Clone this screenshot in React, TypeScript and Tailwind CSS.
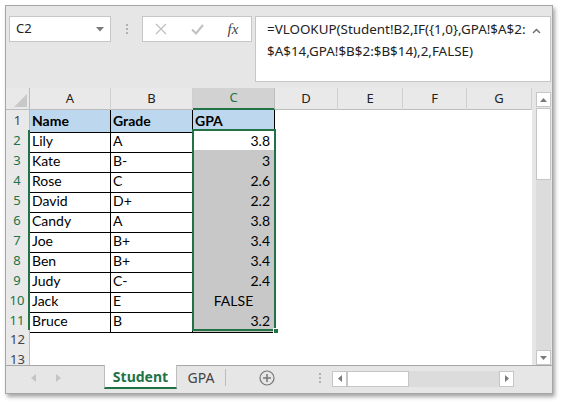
import React from "react";

const COLS = "grid-cols-[24px_81px_82px_82px_63px_65px_64px_65px]";

const data: [string, string, string][] = [
  ["Lily", "A", "3.8"],
  ["Kate", "B-", "3"],
  ["Rose", "C", "2.6"],
  ["David", "D+", "2.2"],
  ["Candy", "A", "3.8"],
  ["Joe", "B+", "3.4"],
  ["Ben", "B+", "3.4"],
  ["Judy", "C-", "2.4"],
  ["Jack", "E", "FALSE"],
  ["Bruce", "B", "3.2"],
];

const ui = { fontFamily: '"Noto Sans", "Open Sans", sans-serif' };
const cellFont = { fontFamily: 'Lato, "Noto Sans", sans-serif' };

function RowHead({ n, sel }: { n: number; sel?: boolean }) {
  return (
    <div
      className={`flex items-center justify-center text-[13px] border-b border-[#d9d9d9] ${
        sel ? "text-[#217346] border-r-2 border-r-[#217346]" : "text-[#444] border-r border-r-[#bdbdbd]"
      } bg-[#e9e9e9]`}
      style={ui}
    >
      {n}
    </div>
  );
}

export default function App() {
  return (
    <div className="w-[565px] h-[402px] bg-white overflow-hidden">
      <div className="ml-[5px] mt-[5px] w-[548px] h-[389px] border border-[#a6a6a6] bg-[#e6e6e6] shadow-[2px_3px_4px_rgba(0,0,0,0.35)] flex flex-col">
        {/* Formula bar area */}
        <div className="h-[82px] flex items-start pt-[10px] pl-[3px]" style={ui}>
          <div className="w-[102px] h-[26px] bg-white border border-[#c6c6c6] flex items-center justify-between pl-[6px] pr-[6px]">
            <span className="text-[13px] text-[#222]">C2</span>
            <svg width="8" height="5" viewBox="0 0 8 5">
              <path d="M0 0 L8 0 L4 4.5 Z" fill="#7a7a7a" />
            </svg>
          </div>
          <div className="w-[31px] h-[26px] flex flex-col items-center justify-center gap-[2px]">
            <span className="w-[2px] h-[2px] bg-[#b0b0b0]" />
            <span className="w-[2px] h-[2px] bg-[#b0b0b0]" />
            <span className="w-[2px] h-[2px] bg-[#b0b0b0]" />
          </div>
          <div className="w-[110px] h-[26px] bg-white border border-[#c6c6c6] flex items-center">
            <div className="w-[36px] flex justify-center">
              <svg width="12" height="12" viewBox="0 0 12 12">
                <path d="M1 1 L11 11 M11 1 L1 11" stroke="#c0c0c0" strokeWidth="1.3" />
              </svg>
            </div>
            <div className="w-[36px] flex justify-center">
              <svg width="13" height="11" viewBox="0 0 13 11">
                <path d="M1 5.5 L5 9.5 L12 1" stroke="#c0c0c0" strokeWidth="2" fill="none" />
              </svg>
            </div>
            <div className="w-[36px] flex justify-center">
              <span className="text-[15px] italic text-[#444] leading-none" style={{ fontFamily: '"Liberation Serif", serif' }}>
                fx
              </span>
            </div>
          </div>
          <div className="ml-[3px] w-[296px] h-[66px] bg-white border border-[#c6c6c6] flex">
            <div className="flex-1 pl-[11px] pt-[1px] text-[13.4px] leading-[22px] text-[#222]">
              <div>=VLOOKUP(Student!B2,IF({'{'}1,0{'}'},GPA!$A$2:</div>
              <div>$A$14,GPA!$B$2:$B$14),2,FALSE)</div>
            </div>
            <div className="w-[18px] pt-[11px]">
              <svg width="9" height="6" viewBox="0 0 9 6">
                <path d="M1 5 L4.5 1.5 L8 5" stroke="#707070" strokeWidth="1.5" fill="none" />
              </svg>
            </div>
          </div>
        </div>

        {/* Sheet */}
        <div className="flex h-[277px]">
          <div className="w-[526px] bg-white relative overflow-hidden">
            {/* column headers */}
            <div className={`grid ${COLS} h-[22px] bg-[#e9e9e9] border-b border-[#bdbdbd]`} style={ui}>
              <div className="flex items-end justify-end pr-[2px] pb-[3px] border-r border-[#bdbdbd]">
                <svg width="13" height="13" viewBox="0 0 13 13">
                  <path d="M13 0 L13 13 L0 13 Z" fill="#c8c8c8" />
                </svg>
              </div>
              {["A", "B", "C", "D", "E", "F", "G"].map((c) => (
                <div
                  key={c}
                  className={`flex items-center justify-center text-[13px] ${
                    c === "C"
                      ? "bg-[#d2d2d2] text-[#217346] border-b-2 border-b-[#217346] border-r border-r-[#bdbdbd]"
                      : "text-[#222] border-r border-r-[#d0d0d0]"
                  }`}
                >
                  {c}
                </div>
              ))}
            </div>
            {/* row 1 */}
            <div className={`grid ${COLS} h-[20px]`} style={cellFont}>
              <RowHead n={1} />
              <div className="bg-[#bdd7ee] border-b border-r border-black font-bold text-[14px] pl-[2px] flex items-end pb-[1px] text-black">Name</div>
              <div className="bg-[#bdd7ee] border-b border-r border-black font-bold text-[14px] pl-[2px] flex items-end pb-[1px] text-black">Grade</div>
              <div className="bg-[#bdd7ee] border-b border-r border-black font-bold text-[14px] pl-[2px] flex items-end pb-[1px] text-black">GPA</div>
              <div />
              <div />
              <div />
              <div />
            </div>
            {data.map((r, i) => (
              <div key={i} className={`grid ${COLS} h-[20px]`} style={cellFont}>
                <RowHead n={i + 2} sel />
                <div className="border-b border-r border-black text-[14px] pl-[2px] flex items-end pb-[1px] text-black">{r[0]}</div>
                <div className="border-b border-r border-black text-[14px] pl-[2px] flex items-end pb-[1px] text-black">{r[1]}</div>
                <div
                  className={`border-b border-r border-black text-[14px] flex items-end pb-[1px] text-black ${
                    r[2] === "FALSE" ? "justify-center" : "justify-end pr-[4px]"
                  } ${i === 0 ? "bg-white" : "bg-[#c8c8c8]"}`}
                >
                  {r[2]}
                </div>
                <div />
                <div />
                <div />
                <div />
              </div>
            ))}
            <div className={`grid ${COLS} h-[20px]`}>
              <RowHead n={12} />
            </div>
            <div className={`grid ${COLS} h-[20px]`}>
              <RowHead n={13} />
            </div>
            {/* selection box over C2:C11 */}
            <div className="absolute left-[186px] top-[41px] w-[84px] h-[202px] border-2 border-[#217346]" />
            <div className="absolute left-[267px] top-[240px] w-[6px] h-[6px] bg-[#217346] border border-white" />
          </div>
          {/* vertical scrollbar */}
          <div className="w-[20px] flex flex-col pl-[4px] pt-[4px] pb-[0px]">
            <div className="w-[15px] h-[15px] bg-white border border-[#c6c6c6] flex items-center justify-center">
              <svg width="7" height="4" viewBox="0 0 7 4">
                <path d="M0 4 L3.5 0 L7 4 Z" fill="#7a7a7a" />
              </svg>
            </div>
            <div className="w-[15px] h-[72px] bg-white border border-[#c6c6c6] mt-[1px]" />
            <div className="flex-1 bg-[#dcdcdc] w-[15px]" />
            <div className="w-[15px] h-[15px] bg-white border border-[#c6c6c6] flex items-center justify-center">
              <svg width="7" height="4" viewBox="0 0 7 4">
                <path d="M0 0 L3.5 4 L7 0 Z" fill="#7a7a7a" />
              </svg>
            </div>
          </div>
        </div>

        {/* Tab bar */}
        <div className="flex-1 flex items-start" style={ui}>
          <div className="w-[98px] h-[24px] border-t border-[#a6a6a6] flex items-center gap-[20px] pl-[25px]">
            <svg width="5" height="8" viewBox="0 0 5 8">
              <path d="M5 0 L0 4 L5 8 Z" fill="#c4c4c4" />
            </svg>
            <svg width="5" height="8" viewBox="0 0 5 8">
              <path d="M0 0 L5 4 L0 8 Z" fill="#c4c4c4" />
            </svg>
          </div>
          <div className="w-[73px] h-[24px] bg-white border-x border-[#bdbdbd] border-b-2 border-b-[#217346] flex items-center justify-center text-[14px] font-bold text-[#217346]">
            Student
          </div>
          <div className="h-[24px] flex-1 border-t border-[#a6a6a6] flex items-center">
            <div className="w-[48px] text-center text-[14px] text-[#444]">GPA</div>
            <div className="w-px h-[17px] bg-[#bdbdbd]" />
            <div className="w-[82px] flex justify-center">
              <svg width="16" height="16" viewBox="0 0 16 16">
                <circle cx="8" cy="8" r="7" stroke="#777" strokeWidth="1.2" fill="none" />
                <path d="M8 4 V12 M4 8 H12" stroke="#777" strokeWidth="1.5" />
              </svg>
            </div>
            <div className="w-[24px] flex flex-col items-center gap-[2px]">
              <span className="w-[2px] h-[2px] bg-[#b0b0b0]" />
              <span className="w-[2px] h-[2px] bg-[#b0b0b0]" />
              <span className="w-[2px] h-[2px] bg-[#b0b0b0]" />
            </div>
            <div className="flex items-center h-[16px] mt-[2px]">
              <div className="w-[15px] h-[16px] bg-white border border-[#c6c6c6] flex items-center justify-center">
                <svg width="4" height="7" viewBox="0 0 4 7">
                  <path d="M4 0 L0 3.5 L4 7 Z" fill="#7a7a7a" />
                </svg>
              </div>
              <div className="w-[62px] h-[16px] bg-white border border-[#c6c6c6]" />
              <div className="w-[90px] h-[16px] bg-[#dcdcdc]" />
              <div className="w-[15px] h-[16px] bg-white border border-[#c6c6c6] flex items-center justify-center">
                <svg width="4" height="7" viewBox="0 0 4 7">
                  <path d="M0 0 L4 3.5 L0 7 Z" fill="#7a7a7a" />
                </svg>
              </div>
            </div>
          </div>
        </div>
      </div>
    </div>
  );
}
